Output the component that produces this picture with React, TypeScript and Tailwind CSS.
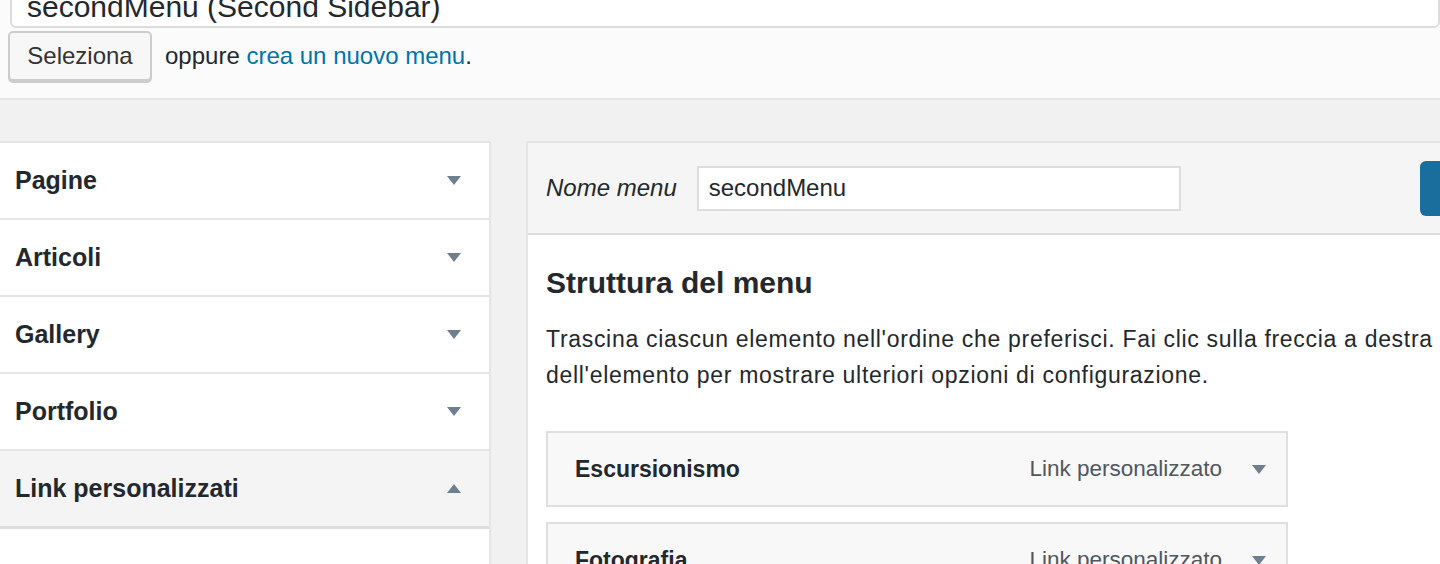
import React from "react";

const font = { fontFamily: '"Liberation Sans", Arial, sans-serif' };

function Arrow({ up = false }: { up?: boolean }) {
  return (
    <svg width="14" height="9" viewBox="0 0 14 9" className="shrink-0">
      {up ? (
        <polygon points="0,9 14,9 7,0" fill="#6f7f90" />
      ) : (
        <polygon points="0,0 14,0 7,9" fill="#6f7f90" />
      )}
    </svg>
  );
}

const sections = ["Pagine", "Articoli", "Gallery", "Portfolio"];

export default function App() {
  return (
    <div className="w-[1440px] h-[564px] overflow-hidden bg-[#f1f1f1] text-[#23282d]" style={font}>
      {/* top menu selector */}
      <div className="h-[100px] flex flex-col bg-[#fbfbfb] border-b-2 border-[#e5e5e5] pl-[8px]">
        <div className="-mt-[13px] ml-[2px] h-[41px] bg-white border-2 border-[#dcdcdc] rounded-[6px] flex items-end pl-[15px] pb-[4px]">
          <span className="text-[30px] leading-[30px]">secondMenu (Second Sidebar)</span>
        </div>
        <div className="mt-[3px] flex items-center">
          <button className="h-[50px] w-[144px] bg-[#f7f7f7] border-2 border-[#cccccc] rounded-[5px] shadow-[0_2px_0_#cccccc] text-[24px] text-[#333]">
            Seleziona
          </button>
          <span className="ml-[13px] text-[24px]">
            oppure <a className="text-[#0073aa]">crea un nuovo menu</a>.
          </span>
        </div>
      </div>

      <div className="flex items-start mt-[41px]">
        {/* left accordion */}
        <div className="w-[491px] shrink-0 border-t-2 border-r-2 border-[#e5e5e5] bg-white h-[440px]">
          {sections.map((s) => (
            <div
              key={s}
              className="h-[77px] flex items-center justify-between pl-[15px] pr-[28px] border-b-2 border-[#e5e5e5]"
            >
              <span className="text-[25px] font-bold">{s}</span>
              <Arrow />
            </div>
          ))}
          <div className="h-[78px] flex items-center justify-between pl-[15px] pr-[28px] bg-[#f4f4f4] border-b-[3px] border-[#dddddd]">
            <span className="text-[25px] font-bold">Link personalizzati</span>
            <Arrow up />
          </div>
        </div>

        {/* right menu editor */}
        <div className="ml-[35px] flex-1 border-l-2 border-t-2 border-[#e5e5e5] bg-white h-[440px]">
          <div className="h-[92px] bg-[#f5f5f5] border-b-2 border-[#dddddd] flex items-center pl-[18px]">
            <span className="text-[24px] italic">Nome menu</span>
            <div className="ml-[20px] w-[484px] h-[45px] bg-white border-2 border-[#dddddd] flex items-center pl-[10px]">
              <span className="text-[24px]">secondMenu</span>
            </div>
            <div className="ml-auto -mr-[40px] w-[60px] h-[55px] rounded-[6px] bg-[#1a6e9e]" />
          </div>
          <div className="pl-[18px] pt-[28px]">
            <h3 className="text-[30px] leading-[40px] font-bold">Struttura del menu</h3>
            <p className="mt-[18px] text-[23px] leading-[36px] tracking-[0.03em] whitespace-nowrap">
              Trascina ciascun elemento nell'ordine che preferisci. Fai clic sulla freccia a destra
              <br />
              dell'elemento per mostrare ulteriori opzioni di configurazione.
            </p>
            <div className="mt-[38px] flex flex-col gap-[15px]">
              {["Escursionismo", "Fotografia"].map((t) => (
                <div
                  key={t}
                  className="w-[742px] h-[76px] bg-[#f8f8f8] border-2 border-[#dfdfdf] flex items-center pl-[27px] pr-[20px]"
                >
                  <span className="text-[23px] font-bold">{t}</span>
                  <span className="ml-auto text-[22.5px] text-[#50575e]">Link personalizzato</span>
                  <span className="ml-[30px]">
                    <Arrow />
                  </span>
                </div>
              ))}
            </div>
          </div>
        </div>
      </div>
    </div>
  );
}
